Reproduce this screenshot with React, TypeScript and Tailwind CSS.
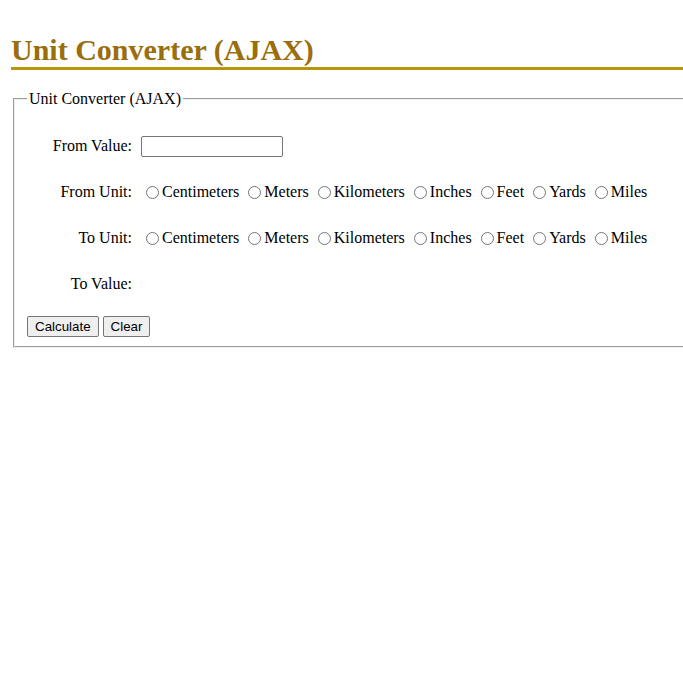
const UNITS = ['Centimeters', 'Meters', 'Kilometers', 'Inches', 'Feet', 'Yards', 'Miles'];

function UnitRadios({ name }: { name: string }) {
  return (
    <div className="flex items-center gap-[4px]">
      {UNITS.map((u) => (
        <label key={u} className="inline-flex items-center">
          <input type="radio" name={name} value={u} className="ml-[5px] mr-[3px] w-[13px] h-[13px]" />
          <span>{u}</span>
        </label>
      ))}
    </div>
  );
}

function Row({ label, children }: { label: string; children?: React.ReactNode }) {
  return (
    <div className="flex items-center h-[46px]">
      <div className="w-[105px] text-right shrink-0">{label}</div>
      <div className="pl-[9px] flex items-center">{children}</div>
    </div>
  );
}

export default function App() {
  return (
    <div className="min-h-[680px] bg-white overflow-hidden pl-[11px] font-['Liberation_Serif',serif] text-[16px] text-black">
      <h1 className="mt-[33px] h-[37px] leading-[34px] text-[30px] font-bold text-[#9a6e0c] border-b-[3px] border-[#b8960b]">
        Unit Converter (AJAX)
      </h1>
      <fieldset className="mt-[20px] ml-[2px] mr-[-12px] border-2 [border-style:groove] border-[#f0f0f0] px-[12px] pb-[9px] pt-[15px]">
        <legend className="px-[2px] leading-[18px]">Unit Converter (AJAX)</legend>
        <Row label="From Value:">
          <input type="text" className="w-[142px] h-[21px] border border-[#767676] rounded-[2px] px-[2px] text-[13px] font-['Liberation_Sans',sans-serif]" />
        </Row>
        <Row label="From Unit:">
          <UnitRadios name="from" />
        </Row>
        <Row label="To Unit:">
          <UnitRadios name="to" />
        </Row>
        <Row label="To Value:" />
        <div className="flex gap-[4px] mt-[9px] font-['Liberation_Sans',sans-serif] text-[13.33px]">
          <button type="button" className="h-[21px] px-[7px] bg-[#efefef] border border-[#767676] rounded-[2px] leading-none">
            Calculate
          </button>
          <button type="button" className="h-[21px] px-[7px] bg-[#efefef] border border-[#767676] rounded-[2px] leading-none">
            Clear
          </button>
        </div>
      </fieldset>
    </div>
  );
}
